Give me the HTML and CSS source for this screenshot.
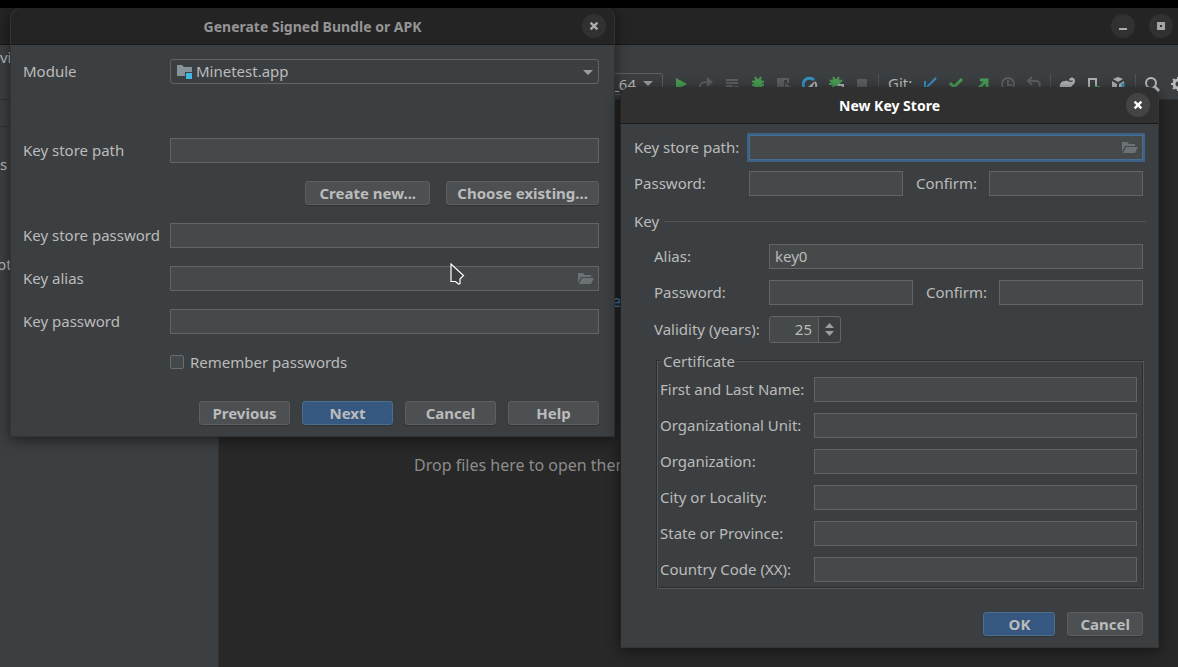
FILE: index.html
```html
<!DOCTYPE html>
<html lang="en">
<head>
<meta charset="utf-8">
<title>Generate Signed Bundle or APK</title>
<link rel="stylesheet" href="styles.css">
</head>
<body>
<main class="desktop">
  <div class="system-bar"></div>
  <header class="ide-title">
    <button class="round-btn" type="button" aria-label="Minimize"><svg width="16" height="16"><path d="M4 11h8" stroke="#aaa" stroke-width="2"/></svg></button>
    <button class="round-btn" type="button" aria-label="Maximize"><svg width="16" height="16"><path d="M5.500 5.500h5v5h-5z" fill="none" stroke="#a4a4a4" stroke-width="3"/></svg></button>
  </header>
  <nav class="ide-menu">vi</nav>
  <div class="toolbar">
    <div class="config"><span>_64</span><svg width="10" height="6"><path d="M0 0h10L5 5z" fill="#9a9da0"/></svg></div>
    <div class="tools">
      <svg class="icon" viewBox="0 0 16 16"><path d="M4 2l11 6-11 6z" fill="#499c54"/></svg>
      <svg class="icon" viewBox="0 0 16 16"><path d="M2 13c-1-5 2-7 6-7h2" fill="none" stroke="#5c5f61" stroke-width="2"/><path d="M9 1l6 5-6 5z" fill="#5c5f61"/></svg>
      <svg class="icon" viewBox="0 0 16 16"><path d="M2 4h12M2 7h12M2 10h7" stroke="#5c5f61" stroke-width="2"/><path d="M10 10h5l-3 4z" fill="#5c5f61"/></svg>
      <svg class="icon" viewBox="0 0 16 16"><path d="M5 1l2 3M11 1L9 4M2 5l3 2h6l3-2M2 9h12M2 14l4-3M14 14l-4-3" fill="none" stroke="#499c54" stroke-width="2"/><rect x="4" y="3" width="8" height="12" rx="3" fill="#499c54"/></svg>
      <svg class="icon" viewBox="0 0 16 16"><path d="M1 2h7v10l-3 3-4-3z" fill="#5c5f61"/><path d="M7 3h5v4" fill="none" stroke="#5c5f61" stroke-width="2"/><path d="M9 7l6 4-6 4z" fill="#5c5f61"/></svg>
      <svg class="icon" viewBox="0 0 16 16"><path d="M3 13A6 6 0 0 1 12 4" fill="none" stroke="#3592c4" stroke-width="3"/><path d="M13 6a6 6 0 0 1 0 7" fill="none" stroke="#afb1b3" stroke-width="2"/><path d="M6 11l7-6-3 7z" fill="#afb1b3"/></svg>
      <svg class="icon" viewBox="0 0 16 16"><path d="M5 1l2 3M11 1L9 4M2 4l3 3h6l3-3M1 8h9M2 13l4-3" fill="none" stroke="#499c54" stroke-width="2"/><rect x="4" y="3" width="8" height="7" rx="2" fill="#499c54"/><path d="M10 9h6M15 9v6" stroke="#afb1b3" stroke-width="2"/></svg>
      <svg class="icon" viewBox="0 0 16 16"><path d="M3 3h10v10H3z" fill="#5c5f61"/></svg>
    </div>
    <i class="rule"></i>
    <div class="tools"><span class="git">Git:</span>
      <svg class="icon" viewBox="0 0 16 16"><path d="M14 2L5 11M3 5v8h8" fill="none" stroke="#3592c4" stroke-width="2"/></svg>
      <svg class="icon" viewBox="0 0 16 16"><path d="M2 7l4 4 8-8" fill="none" stroke="#499c54" stroke-width="3"/></svg>
      <svg class="icon" viewBox="0 0 16 16"><path d="M4 13l8-8M6 4h7v7" fill="none" stroke="#499c54" stroke-width="3"/></svg>
      <svg class="icon" viewBox="0 0 16 16"><path d="M8 4v5h4" fill="none" stroke="#5c5f61" stroke-width="2"/><circle cx="8" cy="8" r="6" fill="none" stroke="#5c5f61" stroke-width="2"/></svg>
      <svg class="icon" viewBox="0 0 16 16"><path d="M3 5h7c5 0 5 8 0 8M6 1L2 5l4 4" fill="none" stroke="#5c5f61" stroke-width="2"/></svg>
    </div>
    <i class="rule"></i>
    <div class="tools">
      <svg class="icon" viewBox="0 0 16 16"><path d="M1 14c-1-6 1-9 5-9 3-1 4 1 6 1s2-2 1-2l-1 1-2-1c1-4 6-3 6 1 0 4-4 4-4 7v2H9v-3H5v3z" fill="#afb1b3"/><path d="M12 11h4v4h-4z" fill="#3592c4"/></svg>
      <svg class="icon" viewBox="0 0 16 16"><path d="M4 3h7v11H4z" fill="none" stroke="#afb1b3" stroke-width="2"/><path d="M10 10h5v5h-5z" fill="#499c54"/></svg>
      <svg class="icon" viewBox="0 0 16 16"><path d="M7 1l5 2-5 3-5-3zM1 5l5 3v6l-5-3zM8 8l5-3v5l-5 4z" fill="#afb1b3"/><path d="M12 7v6" stroke="#3592c4" stroke-width="3"/></svg>
    </div>
    <i class="rule"></i>
    <div class="tools">
      <svg class="icon" viewBox="0 0 16 16"><circle cx="7" cy="7" r="5" fill="none" stroke="#b8babb" stroke-width="2"/><path d="M10 10l5 5" stroke="#b8babb" stroke-width="3"/></svg>
      <svg class="icon" viewBox="0 0 16 16"><circle cx="8" cy="8" r="4" fill="none" stroke="#b8babb" stroke-width="3"/><path d="M8 1v3M8 12v3M1 8h3M12 8h3M3 3l2 2M11 11l2 2M3 13l2-2M11 5l2-2" stroke="#b8babb" stroke-width="2"/></svg>
    </div>
  </div>
  <div class="workspace">
    <aside class="project">
      <div class="crumb"></div>
      <p class="row-s">s</p>
      <p class="row-pt">pt</p>
    </aside>
    <section class="editor">
      <p class="shortcut">e</p>
      <p class="hint">Drop files here to open them</p>
    </section>
  </div>

  <section class="dialog sign" aria-label="Generate Signed Bundle or APK">
    <header class="dialog-title"><h2>Generate Signed Bundle or APK</h2>
      <button class="round-btn" type="button" aria-label="Close"><svg width="16" height="16"><path d="M4.600 4.600l6.800 6.800M11.400 4.600l-6.800 6.800" stroke="currentColor" stroke-width="2.400"/></svg></button>
    </header>
    <form class="sign-body">
      <div class="field module"><label for="module">Module</label>
        <div class="control"><select id="module" class="select"><option>Minetest.app</option></select>
          <svg class="module-icon" width="16" height="16" viewBox="0 0 16 16"><path d="M0 1h5l2 2h8v5H8v4H0z" fill="#87939a"/><path d="M9 9h6v6H9z" fill="#40b6e0"/></svg>
          <svg class="caret" width="10" height="6"><path d="M0 0h10L5 5z" fill="#9a9da0"/></svg></div>
      </div>
      <div class="field"><label for="store">Key store path</label><input class="text" id="store" type="text"></div>
      <div class="store-actions"><button class="btn" type="button">Create new...</button><button class="btn" type="button">Choose existing...</button></div>
      <div class="field"><label for="storepw">Key store password</label><input class="text" id="storepw" type="password"></div>
      <div class="field"><label for="alias">Key alias</label>
        <div class="control"><input class="text" id="alias" type="text"><svg class="folder" width="16" height="12" viewBox="0 0 16 12"><path d="M0 0h5l2 2h6v2H3L0 10z" fill="#6b7276"/><path d="M4 5h12l-3 6H1z" fill="#6b7276"/></svg></div></div>
      <div class="field"><label for="keypw">Key password</label><input class="text" id="keypw" type="password"></div>
      <label class="remember"><input type="checkbox">Remember passwords</label>
      <footer class="actions"><button class="btn" type="button">Previous</button><button class="btn primary" type="button">Next</button><button class="btn" type="button">Cancel</button><button class="btn" type="button">Help</button></footer>
    </form>
  </section>

  <section class="dialog keystore" aria-label="New Key Store">
    <header class="dialog-title"><h2>New Key Store</h2>
      <button class="round-btn" type="button" aria-label="Close"><svg width="16" height="16"><path d="M4.600 4.600l6.800 6.800M11.400 4.600l-6.800 6.800" stroke="currentColor" stroke-width="2.400"/></svg></button>
    </header>
    <form class="key-body">
      <div class="field"><label for="path">Key store path:</label>
        <div class="control"><input class="text focused" id="path" type="text"><svg class="folder" width="16" height="12" viewBox="0 0 16 12"><path d="M0 0h5l2 2h6v2H3L0 10z" fill="#6b7276"/><path d="M4 5h12l-3 6H1z" fill="#6b7276"/></svg></div></div>
      <div class="field pair"><label for="pw1">Password:</label><input class="text" id="pw1" type="password"><label for="pw2">Confirm:</label><input class="text" id="pw2" type="password"></div>
      <h3 class="section">Key</h3>
      <div class="key-group">
        <div class="field"><label for="key">Alias:</label><input class="text" id="key" type="text" value="key0"></div>
        <div class="field pair"><label for="pw3">Password:</label><input class="text" id="pw3" type="password"><label for="pw4">Confirm:</label><input class="text" id="pw4" type="password"></div>
        <div class="field"><label for="years">Validity (years):</label>
          <div class="spinner"><input id="years" type="number" value="25"><div class="steps">
            <button type="button" aria-label="Increase"><svg width="9" height="5"><path d="M0 5h9L4.500 0z" fill="#9a9da0"/></svg></button>
            <button type="button" aria-label="Decrease"><svg width="9" height="5"><path d="M0 0h9L4.500 5z" fill="#9a9da0"/></svg></button></div></div></div>
      </div>
      <fieldset class="cert"><legend>Certificate</legend>
        <div class="cert-rows">
          <div class="field"><label for="c1">First and Last Name:</label><input class="text" id="c1" type="text"></div>
          <div class="field"><label for="c2">Organizational Unit:</label><input class="text" id="c2" type="text"></div>
          <div class="field"><label for="c3">Organization:</label><input class="text" id="c3" type="text"></div>
          <div class="field"><label for="c4">City or Locality:</label><input class="text" id="c4" type="text"></div>
          <div class="field"><label for="c5">State or Province:</label><input class="text" id="c5" type="text"></div>
          <div class="field"><label for="c6">Country Code (XX):</label><input class="text" id="c6" type="text"></div>
        </div>
      </fieldset>
      <footer class="actions"><button class="btn primary" type="button">OK</button><button class="btn" type="button">Cancel</button></footer>
    </form>
  </section>

  <svg class="pointer" width="16" height="24" viewBox="0 0 16 24"><path d="M1 1v17.500h4.500l3 2.500 1.500-.5v-4.500l3.500-3.500z" fill="#3c3f41" stroke="#fff" stroke-width="1.200"/></svg>
</main>
</body>
</html>
```
FILE: styles.css
```css
* { box-sizing: border-box; }
body {
  margin: 0;
  background: #282828;
  color: #bbb;
  font: 15px/20px "Noto Sans", "Open Sans", sans-serif;
}
h2, h3, p { margin: 0; }
input, select, button { font: inherit; color: inherit; }
svg { display: block; flex: none; }

.desktop {
  position: relative;
  display: flex;
  flex-direction: column;
  min-height: 100vh;
  overflow: hidden;
}
.system-bar { height: 8px; background: #000; }
.ide-title {
  display: flex;
  justify-content: flex-end;
  align-items: center;
  gap: 14px;
  height: 37px;
  padding-right: 5px;
  background: #242424;
  border-bottom: 1px solid #191919;
}
.round-btn {
  display: flex;
  align-items: center;
  justify-content: center;
  flex: none;
  width: 24px;
  height: 24px;
  padding: 0;
  border: 0;
  border-radius: 50%;
  background: #313131;
  color: #aaa;
}
.ide-menu { height: 25px; padding-top: 2px; background: #3c3f41; }
.toolbar {
  display: flex;
  align-items: center;
  gap: 8px;
  height: 30px;
  padding: 0 0 1px 441px;
  overflow: hidden;
  background: #3c3f41;
  border-bottom: 1px solid #323232;
}
.config {
  display: flex;
  flex: none;
  align-items: center;
  justify-content: flex-end;
  gap: 7px;
  width: 222px;
  height: 22px;
  padding-right: 9px;
  border: 1px solid #5e6060;
  border-radius: 3px;
}
.tools { display: flex; flex: none; align-items: center; gap: 10px; }
.config + .tools { padding-left: 1px; }
.git { padding: 0 0 2px 1px; }
.icon { width: 16px; height: 16px; }
.rule { flex: none; width: 1px; height: 20px; background: #515151; }

.workspace { display: flex; flex: 1; }
.project { width: 219px; background: #3c3f41; border-right: 1px solid #323232; }
.crumb { height: 27px; border-bottom: 1px solid #323232; }
.row-s { margin-top: 27px; }
.row-pt { margin-top: 80px; margin-left: -3px; }
.editor { flex: 1; padding: 191px 0 0 195px; font-size: 16px; }
.shortcut { margin-left: 198px; color: #4a88c7; }
.hint { margin-top: 144px; color: #8c8c8c; }

.dialog {
  position: absolute;
  background: #3c3f41;
  border: 1px solid #333;
  border-top: 0;
  border-radius: 10px 10px 0 0;
  box-shadow: 0 3px 14px rgba(0, 0, 0, .5);
}
.sign { left: 10px; top: 8px; width: 605px; }
.keystore { left: 620px; top: 87px; width: 539px; border-color: #353535; border-left-color: #222; }
.dialog-title {
  display: grid;
  grid-template-columns: 24px 1fr 24px;
  align-items: center;
  height: 37px;
  padding: 0 8px;
  border-radius: 10px 10px 0 0;
  background: #242424;
  border-bottom: 1px solid #191919;
}
.dialog-title h2 {
  grid-column: 2;
  padding-top: 1px;
  text-align: center;
  font-size: 14px;
  font-weight: 700;
  color: #959595;
}
.keystore .dialog-title { background: #303030; }
.keystore .dialog-title h2 { color: #fff; }
.keystore .round-btn { background: #444; color: #fff; }

.field { display: grid; align-items: center; }
.field label { padding-bottom: 2px; }
.control { position: relative; display: flex; }
.text {
  width: 100%;
  min-width: 0;
  height: 25px;
  padding: 0 5px 1px;
  border: 1px solid #646464;
  border-radius: 0;
  outline: 0;
  background: #45494a;
}
.focused { border-color: #466d94; box-shadow: 0 0 0 2px #3d6185; }
.folder { position: absolute; right: 5px; top: 7px; }
.select {
  width: 100%;
  height: 25px;
  padding: 0 25px 2px;
  border: 1px solid #646464;
  border-radius: 3px;
  background: #3c3f41;
  appearance: none;
}
.module-icon { position: absolute; left: 7px; top: 5px; }
.caret { position: absolute; right: 6px; top: 11px; }
.btn {
  height: 24px;
  padding: 0 12px;
  border: 1px solid #5e6060;
  border-radius: 3px;
  background: #4c5052;
  box-shadow: 0 1px 1px rgba(0, 0, 0, .2);
  font-weight: 700;
  line-height: 20px;
  white-space: nowrap;
}
.primary { background: #365880; border-color: #4c708c; }
.actions { display: flex; justify-content: flex-end; gap: 12px; }

.sign-body { display: flex; flex-direction: column; gap: 18px; padding: 14px 15px 11px 12px; }
.sign-body .field { grid-template-columns: 147px 1fr; }
.module { margin-bottom: 36px; }
.store-actions { display: flex; justify-content: flex-end; gap: 16px; }
.store-actions .btn { min-width: 125px; padding: 0 10px; }
.remember { display: flex; align-items: center; gap: 6px; margin-left: 147px; }
.remember input {
  width: 14px;
  height: 14px;
  margin: 0;
  border: 1px solid #6b6b6b;
  border-radius: 2px;
  background: #43494a;
  appearance: none;
}
.sign .actions { margin-top: 11px; }
.sign .actions .btn { width: 91px; }

.key-body { padding: 11px 15px 11px 13px; }
.key-body > .field { grid-template-columns: 115px 1fr; }
.key-body > .pair { grid-template-columns: 115px 1fr 86px 1fr; margin-top: 11px; }
.pair label + input + label { padding-left: 13px; }
.section {
  display: flex;
  align-items: center;
  gap: 5px;
  margin: 15px -3px 13px 0;
  font-size: 15px;
  font-weight: 400;
}
.section::after { content: ""; flex: 1; height: 1px; background: #515456; }
.key-group { display: grid; gap: 11px; padding-left: 20px; }
.key-group .field { grid-template-columns: 115px 1fr; }
.key-group .pair { grid-template-columns: 115px 1fr 86px 1fr; }
.spinner {
  display: flex;
  width: 72px;
  height: 27px;
  border: 1px solid #646464;
  border-radius: 3px;
  overflow: hidden;
}
.spinner input {
  flex: 1;
  min-width: 0;
  padding: 0 6px 1px;
  border: 0;
  border-right: 1px solid #646464;
  background: #45494a;
  text-align: right;
  appearance: textfield;
}
.spinner input::-webkit-inner-spin-button { appearance: none; margin: 0; }
.steps { display: flex; flex-direction: column; justify-content: center; gap: 3px; width: 21px; }
.steps button { display: flex; justify-content: center; padding: 0; border: 0; background: none; }
.cert {
  min-width: 0;
  margin: 8px -1px 23px 23px;
  padding: 6px 6px 6px 2px;
  border: 1px solid #555859;
  box-shadow: -1px -1px 0 #2c2e30, inset -1px -1px 0 #2c2e30;
}
.cert legend { margin-left: 1px; padding: 0 2px; background: #3c3f41; }
.cert-rows { display: grid; gap: 11px; }
.cert .field { grid-template-columns: 154px 1fr; }
.keystore .actions .btn { min-width: 72px; }

.pointer { position: absolute; left: 450px; top: 263px; }
```
